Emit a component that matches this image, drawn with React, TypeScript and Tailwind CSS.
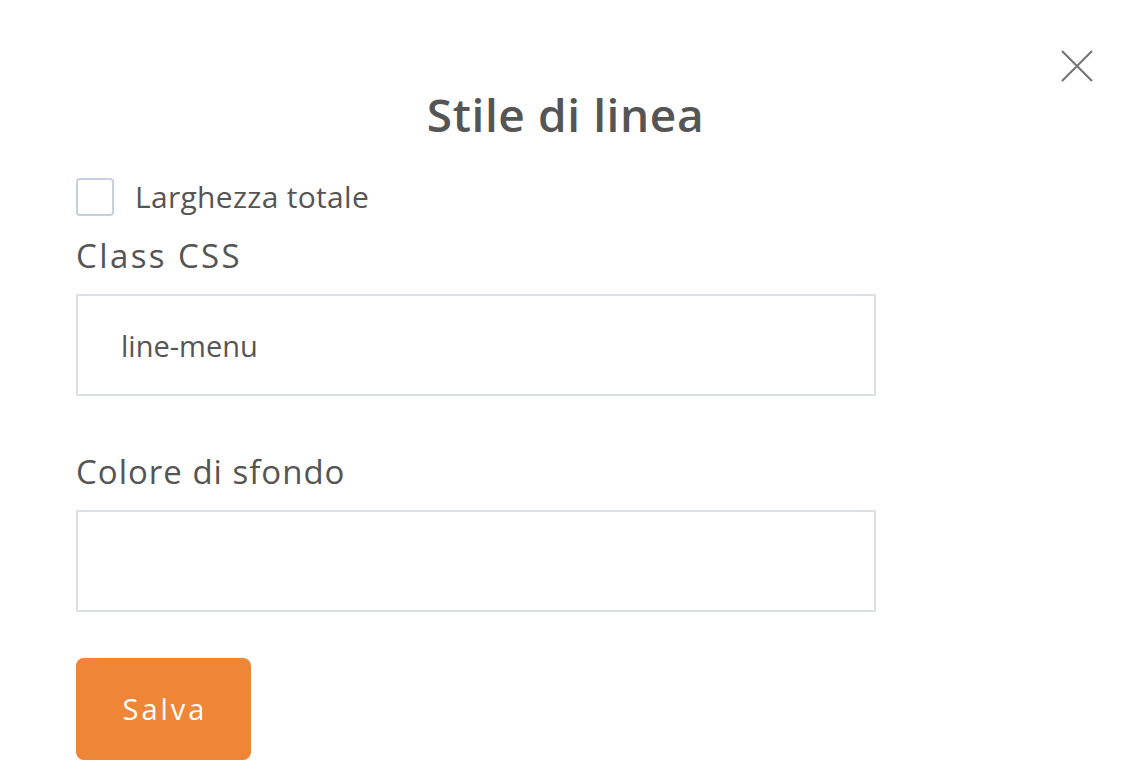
import { useState } from "react";

export default function App() {
  const [fullWidth, setFullWidth] = useState(false);
  const [cssClass, setCssClass] = useState("line-menu");
  const [bgColor, setBgColor] = useState("");

  return (
    <div className="relative min-h-[778px] w-full bg-white font-['Open_Sans',sans-serif] text-[#555555]">
      <button
        className="absolute right-[38px] top-[50px] flex h-[32px] w-[32px] items-center justify-center text-[#777777]"
        title="Chiudi"
      >
        <svg width="32" height="32" viewBox="0 0 32 32" fill="none" stroke="currentColor" strokeWidth="2.2">
          <path d="M1 1L31 31M31 1L1 31" />
        </svg>
      </button>

      <div className="flex flex-col items-start px-[76px] pt-[82px]">
        <h2 className="w-full text-center text-[46px] font-semibold leading-[64px] tracking-[0.6px]">Stile di linea</h2>

        <label className="mt-[31px] flex cursor-pointer items-center gap-[21px]">
          <input
            type="checkbox"
            checked={fullWidth}
            onChange={(e) => setFullWidth(e.target.checked)}
            className="h-[38px] w-[38px] appearance-none rounded-[4px] border-2 border-[#c9d0da] bg-white checked:bg-[#ef8636]"
          />
          <span className="text-[30px] leading-[40px] tracking-[0.3px]">Larghezza totale</span>
        </label>

        <div className="mt-[19px] text-[33px] leading-[40px] tracking-[2.4px]">Class CSS</div>
        <input
          value={cssClass}
          onChange={(e) => setCssClass(e.target.value)}
          className="mt-[18px] block h-[102px] w-[800px] border-2 border-[#dde1e6] px-[43px] text-[29px] text-[#555555] outline-none"
        />

        <div className="mt-[56px] text-[33px] leading-[40px] tracking-[1px]">Colore di sfondo</div>
        <input
          value={bgColor}
          onChange={(e) => setBgColor(e.target.value)}
          className="mt-[18px] block h-[102px] w-[800px] border-2 border-[#dde1e6] px-[43px] text-[29px] text-[#555555] outline-none"
        />

        <button className="mt-[46px] h-[102px] w-[175px] rounded-[8px] bg-[#ef8637] pl-[3px] text-[29px] tracking-[3px] text-white">
          Salva
        </button>
      </div>
    </div>
  );
}
